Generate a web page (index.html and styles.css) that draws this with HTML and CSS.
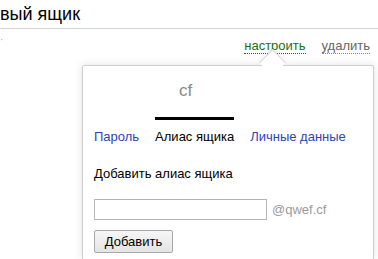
FILE: index.html
```html
<!DOCTYPE html>
<html lang="ru">
<head>
<meta charset="utf-8">
<link rel="stylesheet" href="styles.css">
</head>
<body>
<div class="page">
  <header class="head">
    <h1 class="title">вый ящик</h1>
  </header>
  <div class="row">
    <span class="mark">·</span>
    <nav class="actions">
      <a class="act act-set">настроить</a>
      <a class="act act-del">удалить</a>
    </nav>
  </div>
  <section class="popup">
    <div class="logo">cf</div>
    <div class="tabs">
      <a class="tab">Пароль</a>
      <a class="tab tab-on">Алиас ящика</a>
      <a class="tab">Личные данные</a>
    </div>
    <p class="label">Добавить алиас ящика</p>
    <div class="field">
      <input class="input" type="text">
      <span class="domain">@qwef.cf</span>
    </div>
    <button class="btn" type="button">Добавить</button>
  </section>
</div>
</body>
</html>
```

FILE: styles.css
```css
html, body {
  margin: 0;
  padding: 0;
  background: #fff;
  overflow: hidden;
}
body {
  font-family: Arial, "Liberation Sans", sans-serif;
  width: 378px;
  height: 259px;
}
.page {
  display: flex;
  flex-direction: column;
}
.head {
  height: 28px;
  border-bottom: 1px solid #d4d4d4;
}
.title {
  margin: 0;
  padding: 3px 0 0 0;
  font-size: 18px;
  font-weight: normal;
  line-height: 22px;
  color: #000;
}
.row {
  display: flex;
  justify-content: space-between;
  align-items: flex-start;
  height: 36px;
}
.mark {
  font-size: 10px;
  color: #aaa;
  line-height: 10px;
  margin-top: 6px;
}
.actions {
  display: flex;
  gap: 16px;
  padding: 9px 8px 0 0;
  font-size: 13px;
  line-height: 15px;
}
.act {
  text-decoration: none;
  border-bottom: 1px dotted;
}
.act-set {
  color: #1f6d17;
  border-color: #1f6d17;
}
.act-del {
  color: #666;
  border-color: #888;
}
.popup {
  position: relative;
  margin-left: 82px;
  width: 279px;
  height: 193px;
  border: 1px solid #cfcfcf;
  border-bottom: none;
  background: #fff;
  padding: 0 0 0 11px;
  box-shadow: 0 0 8px rgba(0,0,0,0.12);
  border-radius: 2px 2px 0 0;
}
.popup::before {
  content: "";
  position: absolute;
  top: -13px;
  left: 180px;
  width: 18px;
  height: 18px;
  background: #fff;
  border-left: 1px solid #d8d8d8;
  border-top: 1px solid #d8d8d8;
  transform: rotate(45deg);
  box-shadow: -3px -3px 5px rgba(0,0,0,0.05);
}
.logo {
  margin: 15px 0 0 85px;
  font-size: 17px;
  line-height: 20px;
  color: #8a8a8a;
  position: relative;
}
.tabs {
  display: flex;
  margin-top: 16px;
  font-size: 13px;
  line-height: 15px;
}
.tab {
  color: #2b45b8;
  padding-top: 9px;
  border-top: 3px solid transparent;
  margin-right: 16px;
  text-decoration: none;
}
.tab-on {
  color: #000;
  border-top-color: #000;
}
.label {
  margin: 22px 0 0 0;
  font-size: 13px;
  line-height: 15px;
  color: #000;
}
.field {
  display: flex;
  align-items: center;
  gap: 5px;
  margin-top: 18px;
}
.input {
  box-sizing: border-box;
  width: 173px;
  height: 21px;
  border: 1px solid #b4b4b4;
  margin: 0;
  padding: 0 3px;
}
.domain {
  font-size: 13px;
  color: #9a9a9a;
}
.btn {
  display: block;
  margin-top: 10px;
  box-sizing: border-box;
  width: 79px;
  height: 23px;
  font-family: Arial, "Liberation Sans", sans-serif;
  font-size: 13px;
  color: #000;
  background: linear-gradient(#f6f6f6, #e4e4e4);
  border: 1px solid #a9a9a9;
  border-radius: 2px;
  padding: 0;
}
```
